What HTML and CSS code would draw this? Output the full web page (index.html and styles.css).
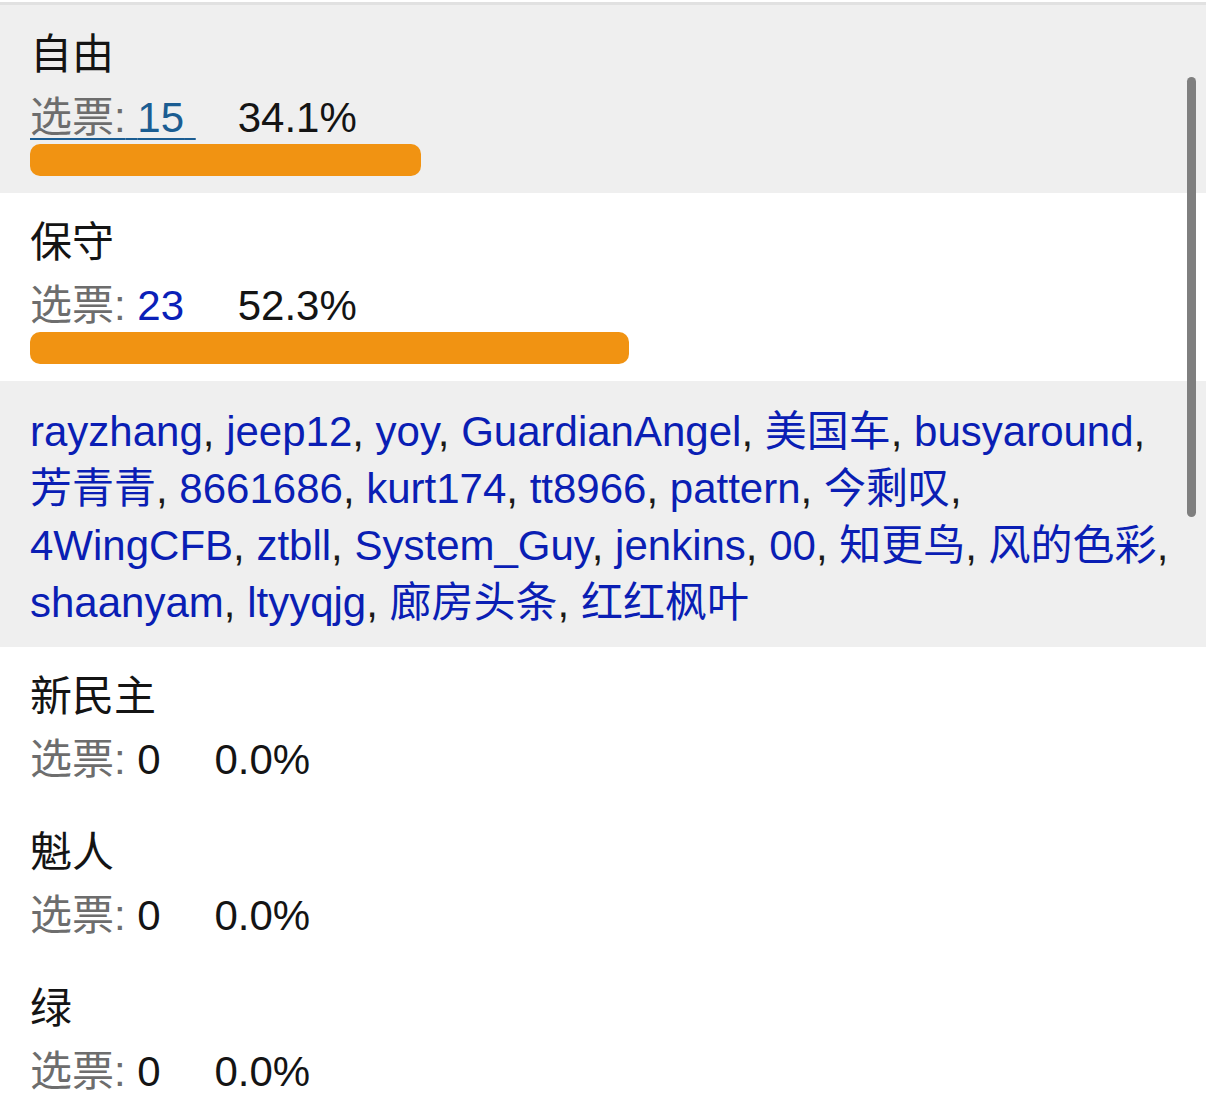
FILE: index.html
```html
<!DOCTYPE html>
<html lang="zh-CN">
<head>
<meta charset="utf-8">
<title>投票结果</title>
<link rel="stylesheet" href="styles.css">
</head>
<body>
<div class="poll">
  <div class="option shaded">
    <div class="title">自由</div>
    <div class="votes"><a class="count active" href="#"><span class="label">选票:</span> <span class="num">15</span> </a><span class="pct">34.1%</span></div>
    <div class="bar" style="width:34.1%"></div>
  </div>
  <div class="option">
    <div class="title">保守</div>
    <div class="votes"><a class="count" href="#"><span class="label">选票:</span> <span class="num">23</span> </a><span class="pct">52.3%</span></div>
    <div class="bar" style="width:52.3%"></div>
  </div>
  <div class="voters"><a href="#">rayzhang</a>, <a href="#">jeep12</a>, <a href="#">yoy</a>, <a href="#">GuardianAngel</a>, <a href="#">美国车</a>, <a href="#">busyaround</a>, <a href="#">芳青青</a>, <a href="#">8661686</a>, <a href="#">kurt174</a>, <a href="#">tt8966</a>, <a href="#">pattern</a>, <a href="#">今剩叹</a>, <a href="#">4WingCFB</a>, <a href="#">ztbll</a>, <a href="#">System_Guy</a>, <a href="#">jenkins</a>, <a href="#">00</a>, <a href="#">知更鸟</a>, <a href="#">风的色彩</a>, <a href="#">shaanyam</a>, <a href="#">ltyyqjg</a>, <a href="#">廊房头条</a>, <a href="#">红红枫叶</a></div>
  <div class="option">
    <div class="title">新民主</div>
    <div class="votes"><span class="count"><span class="label">选票:</span> <span class="zero">0</span> </span><span class="pct">0.0%</span></div>
  </div>
  <div class="option">
    <div class="title">魁人</div>
    <div class="votes"><span class="count"><span class="label">选票:</span> <span class="zero">0</span> </span><span class="pct">0.0%</span></div>
  </div>
  <div class="option">
    <div class="title">绿</div>
    <div class="votes"><span class="count"><span class="label">选票:</span> <span class="zero">0</span> </span><span class="pct">0.0%</span></div>
  </div>
  <div class="scroll-indicator"></div>
</div>
</body>
</html>
```

FILE: styles.css
```css
html, body {
  margin: 0;
  padding: 0;
  background: #ffffff;
}

body {
  font-family: "Liberation Sans", "Noto Sans CJK SC", sans-serif;
  color: #111111;
  overflow: hidden;
}

.poll {
  position: relative;
  margin-top: 2px;
  border-top: 3px solid #e1e1e1;
  background: #ffffff;
}

.option {
  padding: 20px 30px 17px;
  display: flex;
  flex-direction: column;
  align-items: flex-start;
}

.option.shaded {
  background: #efefef;
}

.title {
  font-size: 42px;
  line-height: 60px;
  color: #141414;
}

.votes {
  margin-top: 7px;
  font-size: 42px;
  line-height: 52px;
  white-space: nowrap;
}

.count {
  text-decoration: none;
  color: #6b6b6b;
}

.count.active {
  text-decoration: underline;
  text-decoration-color: #1b5d92;
  text-decoration-thickness: 2px;
  text-underline-offset: 6px;
}

.label {
  color: #6d6d6d;
}

.num {
  color: #0a20b8;
}

.count.active .num {
  color: #1b5d92;
}

.zero {
  color: #141414;
}

.pct {
  margin-left: 42px;
  color: #141414;
}

.bar {
  margin-top: 0;
  height: 32px;
  border-radius: 10px;
  background: #f19312;
}

.voters {
  background: #efefef;
  padding: 22px 20px 16px 30px;
  font-size: 42px;
  line-height: 57px;
  color: #1a1a1a;
}

.voters a {
  color: #0a1eb4;
  text-decoration: none;
  white-space: nowrap;
}

.scroll-indicator {
  position: absolute;
  top: 72px;
  right: 10px;
  width: 9px;
  height: 440px;
  border-radius: 5px;
  background: #7f7f7f;
}
```
